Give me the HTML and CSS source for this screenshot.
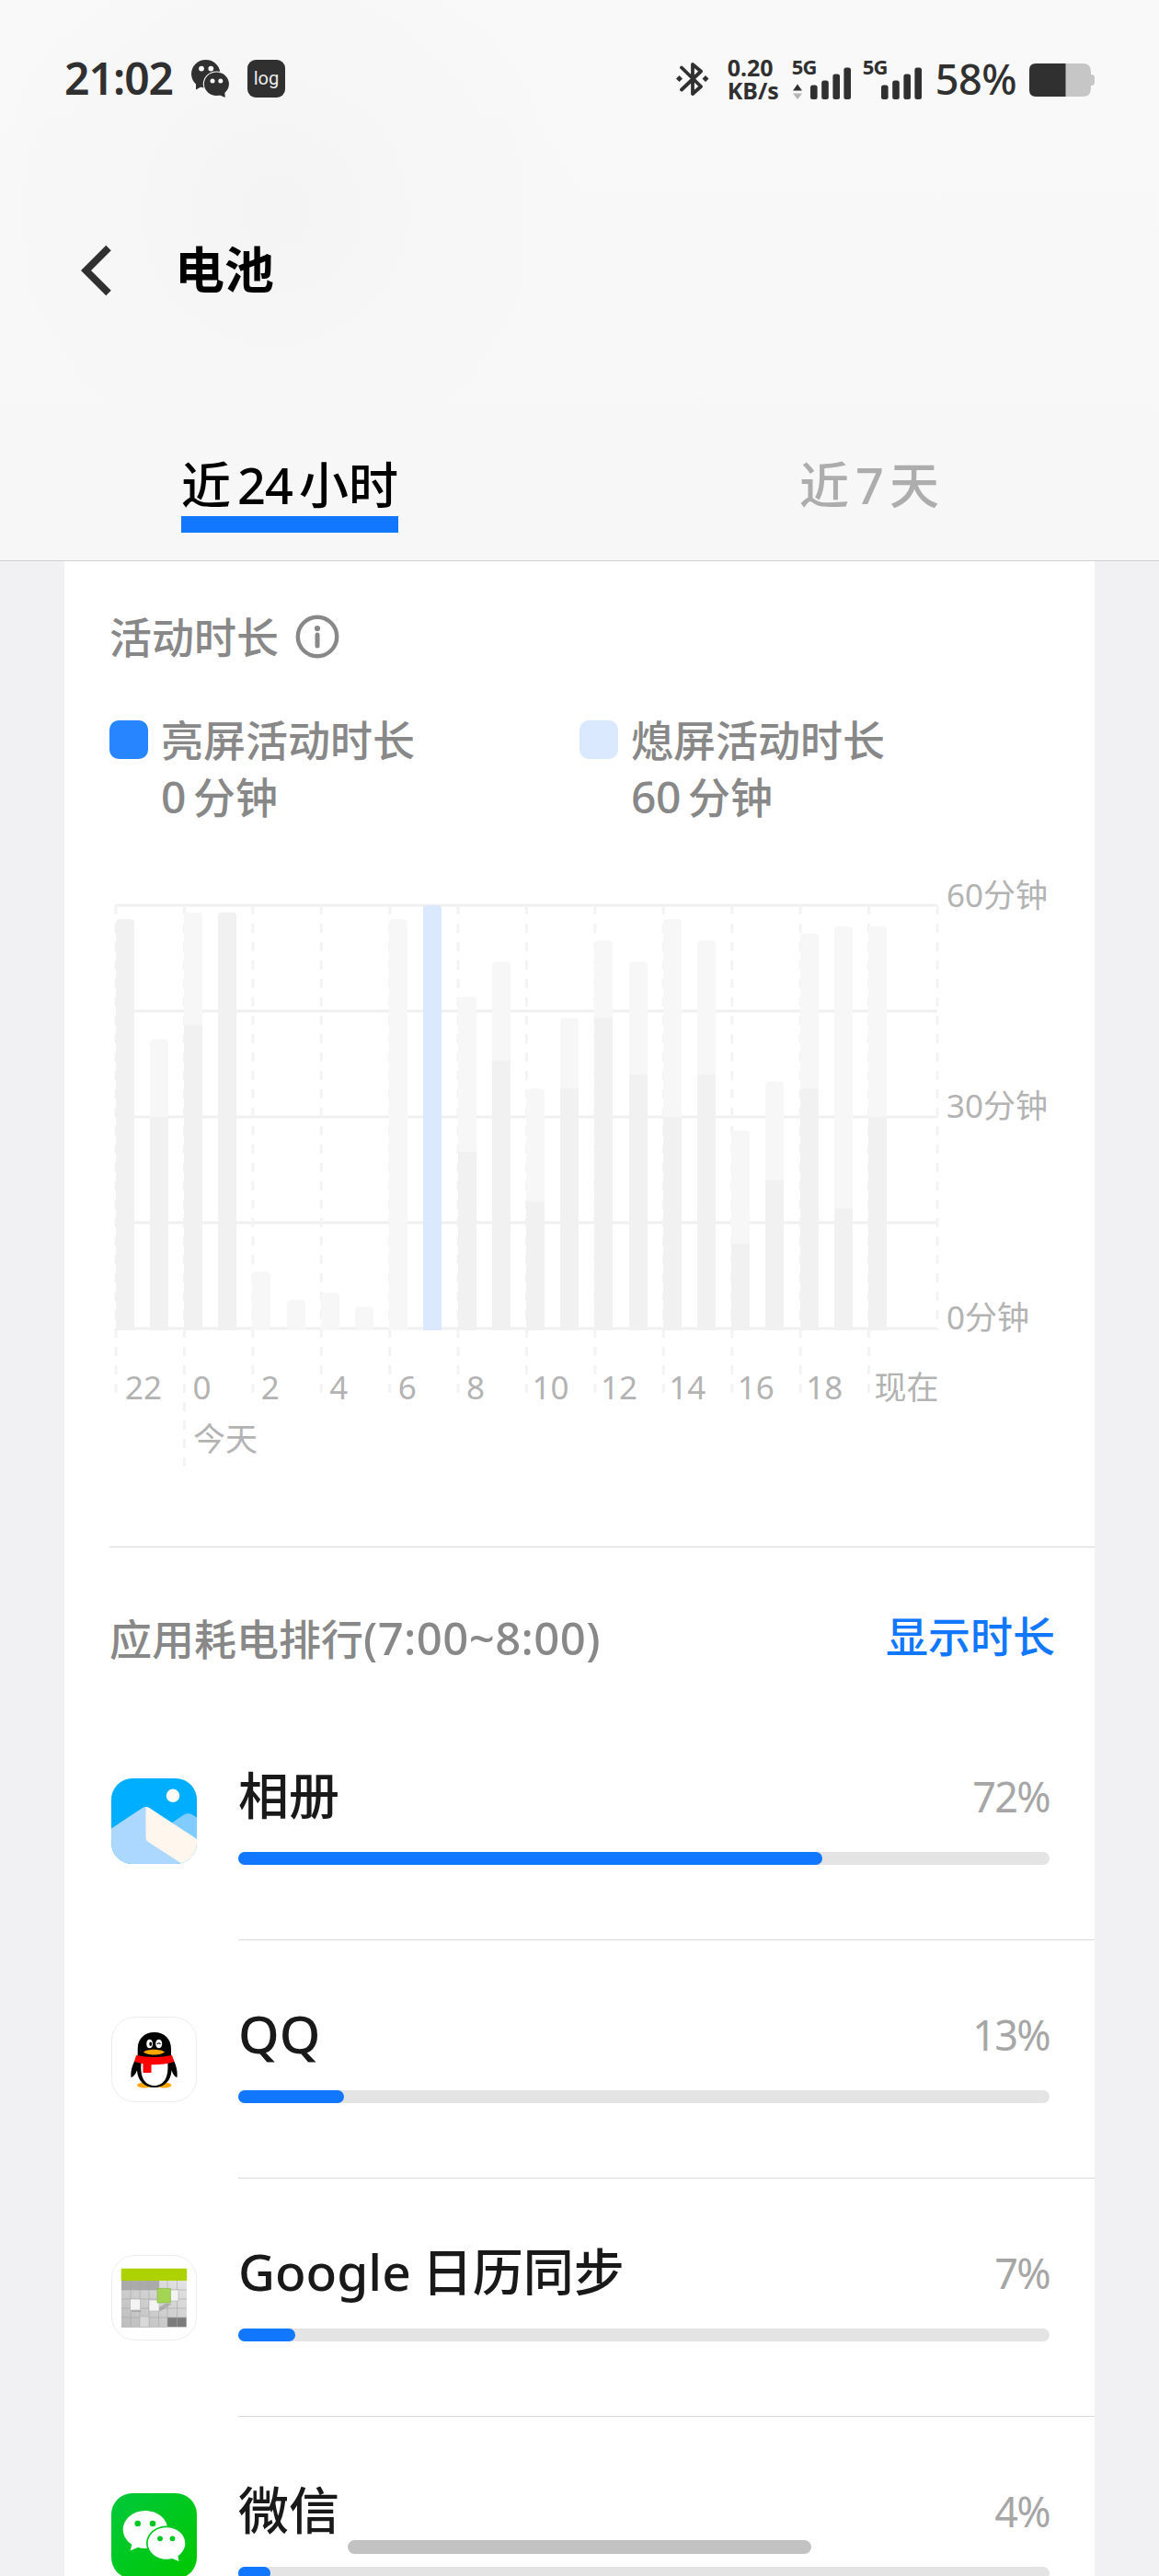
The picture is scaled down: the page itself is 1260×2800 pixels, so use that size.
FILE: index.html
```html
<!DOCTYPE html>
<html lang="zh-CN">
<head>
    <meta charset="UTF-8">
    <meta name="viewport" content="width=device-width, initial-scale=1.0">
    <title>电池</title>
    <link rel="stylesheet" href="styles.css">
</head>
<body>
    <header class="header">
        <div class="status-bar">
            <span class="clock">21:02</span>
            <svg class="status-wechat" width="42" height="42" viewBox="0 0 42 42">
                <ellipse cx="15.7" cy="15.3" rx="15.7" ry="15.3" fill="#303030"/>
                <path d="M5 25 L5 32.5 L13 28z" fill="#303030"/>
                <circle cx="11" cy="9.6" r="2.9" fill="#f8f8f8"/>
                <circle cx="21.3" cy="9.6" r="2.9" fill="#f8f8f8"/>
                <ellipse cx="27.4" cy="26.3" rx="14.6" ry="13.9" fill="#f8f8f8"/>
                <ellipse cx="27.4" cy="26.3" rx="13.5" ry="12.8" fill="#303030"/>
                <path d="M30 38 L36.8 41 L36 33z" fill="#303030"/>
                <circle cx="23" cy="23" r="2.5" fill="#f8f8f8"/>
                <circle cx="31.8" cy="23" r="2.5" fill="#f8f8f8"/>
            </svg>
            <span class="log-badge">log</span>

            <div class="status-right">
                <svg class="bluetooth" width="36" height="40" viewBox="0 0 36 40">
                    <path d="M6 7.5 L27 28 L18 36 V4 L27 11.5 L6 31.5" fill="none" stroke="#303030" stroke-width="3.8" stroke-linecap="round" stroke-linejoin="round"/>
                    <path d="M3.5 16 l3.5 3.5 -3.5 3.5 -3.5 -3.5z M32 16 l3.5 3.5 -3.5 3.5 -3.5 -3.5z" fill="#303030"/>
                </svg>
                <div class="net-speed"><span>0.20</span><span>KB/s</span></div>
                <div class="signal">
                    <span class="net-type">5G</span>
                    <svg width="65" height="45" viewBox="0 0 65 45">
                        <path d="M1 35.5 L6 28.5 L11 35.5z" fill="#303030"/>
                        <path d="M1 38.5 L6 45 L11 38.5z" fill="#b5b5b5"/>
                        <g fill="#303030">
                            <rect x="20" y="29.5" width="7.6" height="15.5" rx="2.5"/>
                            <rect x="32.2" y="24.5" width="7.6" height="20.5" rx="2.5"/>
                            <rect x="44.4" y="17.5" width="7.6" height="27.5" rx="2.5"/>
                            <rect x="56.4" y="10.5" width="7.6" height="34.5" rx="2.5"/>
                        </g>
                    </svg>
                </div>
                <div class="signal">
                    <span class="net-type">5G</span>
                    <svg width="65" height="45" viewBox="0 0 65 45">
                        <g fill="#303030">
                            <rect x="20" y="29.5" width="7.6" height="15.5" rx="2.5"/>
                            <rect x="32.2" y="24.5" width="7.6" height="20.5" rx="2.5"/>
                            <rect x="44.4" y="17.5" width="7.6" height="27.5" rx="2.5"/>
                            <rect x="56.4" y="10.5" width="7.6" height="34.5" rx="2.5"/>
                        </g>
                    </svg>
                </div>
                <span class="battery-text">58%</span>
                <svg class="battery" width="72" height="36" viewBox="0 0 72 36">
                    <path d="M39 0 H58 Q67 0 67 9 V12 Q71 12 71 15 V21 Q71 24 67 24 V27 Q67 36 58 36 H39z" fill="#c6c6c6"/>
                    <path d="M39.5 0 H7 Q0 0 0 7 V29 Q0 36 7 36 H39.5z" fill="#303030"/>
                </svg>
            </div>
        </div>

        <div class="title-bar">
            <svg class="back" width="34" height="56" viewBox="0 0 34 56">
                <path d="M30 3.5 L5.500 28 L30 52.5" fill="none" stroke="#303030" stroke-width="7.8"/>
            </svg>
            <h1>电池</h1>
        </div>

        <nav class="tabs">
            <div class="tab active"><span>近<b>24</b>小时</span></div>
            <div class="tab"><span>近<b>7</b>天</span></div>
        </nav>
    </header>

    <main class="card">
        <section class="activity">
            <h2 class="section-title">活动时长
                <svg width="48" height="48" viewBox="0 0 48 48">
                    <circle cx="24" cy="24" r="21.2" fill="none" stroke="#888" stroke-width="4.4"/>
                    <circle cx="24" cy="15" r="3.1" fill="#888"/>
                    <path d="M24 22 V34" stroke="#888" stroke-width="5" stroke-linecap="round"/>
                </svg>
            </h2>
            <div class="legend">
                <div class="legend-item">
                    <i class="swatch on"></i>
                    <p>亮屏活动时长<br><b class="num">0</b>分钟</p>
                </div>
                <div class="legend-item">
                    <i class="swatch off"></i>
                    <p>熄屏活动时长<br><b class="num">60</b>分钟</p>
                </div>
            </div>
            <svg class="chart" id="chart" width="1071" height="670" viewBox="119 940 1071 670"></svg>
        </section>

        <section class="ranking">
            <div class="ranking-head">
                <h2>应用耗电排行<span>(7:00~8:00)</span></h2>
                <a>显示时长</a>
            </div>

            <div class="app">
                <svg class="icon" viewBox="0 0 93 93">
                    <defs><clipPath id="round"><rect width="93" height="93" rx="23"/></clipPath></defs>
                    <g clip-path="url(#round)">
                        <rect width="93" height="93" fill="#00aeff"/>
                        <path d="M62 51 L79 39.5 Q83.5 37 88 39.5 L93 42.5 V68z" fill="#80ccff"/>
                        <path d="M0 54.5 L34 32 Q37.5 30 41 32 L93 66 V93 H0z" fill="#acd8ff"/>
                        <path d="M37.5 31 Q39.5 31 41 32 L93 66 V93 H77 L40 69 Q37.5 67 37.5 64z" fill="#fff7ee"/>
                        <circle cx="67" cy="18.8" r="7.2" fill="#fffdf5"/>
                    </g>
                </svg>
                <div class="info">
                    <div class="line"><span class="name">相册</span><span class="percent">72%</span></div>
                    <div class="track"><div class="fill" style="width: 72%"></div></div>
                </div>
            </div>

            <div class="app">
                <svg class="icon" viewBox="0 0 93 93">
                    <rect x=".5" y=".5" width="92" height="92" rx="25" fill="#fff" stroke="#ededed"/>
                    <ellipse cx="36" cy="74.5" rx="8" ry="3" fill="#ffa600"/>
                    <ellipse cx="57.5" cy="74.5" rx="8" ry="3" fill="#ffa600"/>
                    <path d="M28.7 42 V35 C28.7 24 36 17 46.8 17 S65 24 65 35 V42 C69 49 72.5 57 71.5 66 C69 66 67 62 65.5 58.5 C65 70 57 77 46.8 77 S28.5 70 28 58.5 C26.5 62 24 66 21.5 66 C20.5 57 24.5 49 28.7 42z"/>
                    <path d="M32.5 51 H61.3 C62.5 66 57 75 46.8 75 S31 66 32.5 51z" fill="#fff"/>
                    <ellipse cx="41.6" cy="29.5" rx="3.3" ry="4.8" fill="#fff"/>
                    <ellipse cx="51.7" cy="29.5" rx="3.5" ry="4.8" fill="#fff"/>
                    <ellipse cx="42.7" cy="29.8" rx="1.4" ry="2.2"/>
                    <path d="M49.7 30 Q51.5 27.5 53.5 30" fill="none" stroke="#000" stroke-width="1.2"/>
                    <path d="M35 38.5 C39 34.8 54 34.8 58 38.5 C54 42.5 39 42.5 35 38.5z" fill="#ffa600"/>
                    <path d="M27 42 Q46.8 46 66 42 L68.3 49 Q58 52.5 43.5 52.3 V61 H34.5 V51.3 L25 49z" fill="#f00"/>
                </svg>
                <div class="info">
                    <div class="line"><span class="name wide">QQ</span><span class="percent">13%</span></div>
                    <div class="track"><div class="fill" style="width: 13%"></div></div>
                </div>
            </div>

            <div class="app">
                <svg class="icon" viewBox="0 0 93 93">
                    <defs>
                        <linearGradient id="sheet" x1="0" y1="1" x2="1" y2="0">
                            <stop offset="0" stop-color="#bcbcbc"/>
                            <stop offset="1" stop-color="#e4e4e4"/>
                        </linearGradient>
                    </defs>
                    <rect x=".5" y=".5" width="92" height="92" rx="25" fill="#fff" stroke="#ededed"/>
                    <rect x="11" y="27" width="71" height="52" fill="url(#sheet)"/>
                    <rect x="11" y="28" width="41" height="10" fill="#aaa"/>
                    <rect x="61" y="68" width="20.5" height="10" fill="#7c7c7c"/>
                    <path d="M21 28 V78 M31 28 V78 M41 28 V78 M51.5 28 V78 M61 28 V78 M71.5 28 V78 M11 38 H82 M11 48 H82 M11 58 H82 M11 68 H82" stroke="#a4a4a4" stroke-width=".6"/>
                    <rect x="10.7" y="14.7" width="71.5" height="13.3" rx="1" fill="#acd300"/>
                    <path d="M46 61 h8 l12-8 h-8z M22 60 h10 v2 h-10z" fill="#8f8f8f" opacity=".5"/>
                    <g fill="#f3f3f3" stroke="#b4b4b4" stroke-width=".6">
                        <rect x="64" y="38" width="9" height="12"/>
                        <rect x="20.7" y="48" width="11" height="12"/>
                        <rect x="41" y="49" width="11" height="12"/>
                        <rect x="31" y="67" width="10" height="11.5" fill="#d8d8d8"/>
                    </g>
                    <rect x="50" y="36.5" width="14.3" height="15.5" fill="#a3d453" stroke="#86b53a" stroke-width=".6"/>
                </svg>
                <div class="info">
                    <div class="line"><span class="name">Google<i class="gap"></i>日历同步</span><span class="percent">7%</span></div>
                    <div class="track"><div class="fill" style="width: 7%"></div></div>
                </div>
            </div>

            <div class="app">
                <svg class="icon" viewBox="0 0 93 93">
                    <defs>
                        <linearGradient id="green" x1="0" y1="0" x2="1" y2="1">
                            <stop offset="0" stop-color="#00c83c"/>
                            <stop offset="1" stop-color="#00c800"/>
                        </linearGradient>
                    </defs>
                    <rect width="93" height="93" rx="23" fill="url(#green)"/>
                    <ellipse cx="37" cy="39.5" rx="24.3" ry="20.5" fill="#fff"/>
                    <path d="M23 54 L20.5 62.5 L31 58z" fill="#fff"/>
                    <ellipse cx="60" cy="54.5" rx="22" ry="19" fill="#00c722"/>
                    <ellipse cx="60" cy="54.5" rx="20.3" ry="17.2" fill="#fff"/>
                    <path d="M64 70 L73.5 74 L72 66z" fill="#fff"/>
                    <g fill="#00c722">
                        <circle cx="28.7" cy="33" r="3.3"/>
                        <circle cx="45" cy="33" r="3.3"/>
                        <circle cx="53" cy="49.3" r="2.9"/>
                        <circle cx="66.5" cy="49.3" r="2.9"/>
                    </g>
                </svg>
                <div class="info">
                    <div class="line"><span class="name">微信</span><span class="percent">4%</span></div>
                    <div class="track"><div class="fill" style="width: 4%"></div></div>
                </div>
            </div>
        </section>
    </main>

    <div class="home-indicator"></div>

    <script>
        // [active minutes, screen-on minutes] for each hour, starting at 22:00
        const usage = [
            [58, 58], [41, 30], [59, 43], [59, 59], [8, 0], [4, 0], [5, 0], [3, 0],
            [58, 0], [60, 0], [47, 25], [52, 38], [34, 18], [44, 34], [55, 44], [52, 36],
            [58, 30], [55, 36], [28, 12], [35, 21], [56, 34], [57, 17], [57, 30]
        ];
        const selected = 9;
        const hours = ['22', '0', '2', '4', '6', '8', '10', '12', '14', '16', '18', '现在'];
        const left = 126, right = 1019, top0 = 984, bottom = 1443.6;
        const step = (right - left) / 24;
        const perMin = (bottom - top0) / 60;
        let out = '';

        for (let i = 0; i <= 4; i++) {
            const y = Math.round(top0 + i * (bottom - top0) / 4);
            out += `<line class="grid" x1="${left}" x2="${right}" y1="${y}" y2="${y}"/>`;
        }
        for (let i = 0; i <= 12; i++) {
            const x = left + i * step * 2;
            const end = i === 12 ? 1446 : i === 1 ? 1594 : 1515;
            out += `<line class="dash" x1="${x}" x2="${x}" y1="${top0}" y2="${end}"/>`;
        }
        usage.forEach(([total, on], i) => {
            const x = Math.floor(left + i * step);
            const bar = (min, cls) => {
                const y = bottom - min * perMin;
                const r = cls === 'on' && min < total ? 0 : 4;
                return `<path class="${cls}" d="M${x} 1446 V${y + r} q0 ${-r} ${r} ${-r} h${20 - 2 * r} q${r} 0 ${r} ${r} V1446z"/>`;
            };
            out += bar(total, i === selected ? 'selected' : 'off');
            if (on) out += bar(on, 'on');
        });
        hours.forEach((h, i) => {
            const pad = i === 0 ? 10 : i > 5 ? 6 : 9;
            out += `<text x="${left + i * step * 2 + pad}" y="1521">${h}</text>`;
        });
        out += '<text x="210" y="1577">今天</text>';
        [60, 30, 0].forEach((m, i) => {
            out += `<text x="1029" y="${985.5 + i * 229.7}">${m}分钟</text>`;
        });
        document.getElementById('chart').innerHTML = out;
    </script>
</body>
</html>
```

FILE: styles.css
```css
* {
    box-sizing: border-box;
}
body {
    margin: 0;
    height: 2800px;
    overflow: hidden;
    background-color: #f1f1f4;
    font-family: "Noto Sans", "Noto Sans CJK SC", sans-serif;
    text-autospace: no-autospace;
}
h1, h2, p {
    margin: 0;
}
b, i {
    font-weight: inherit;
    font-style: normal;
}
svg {
    display: block;
    flex: none;
}
.header {
    height: 610px;
    border-bottom: 1px solid #d0d0d1;
    background: radial-gradient(circle at 300px 230px, #f4f4f4 0, #f7f7f7 210px, rgba(247, 247, 247, 0) 330px), linear-gradient(#f9f9f9, #f7f7f7);
}

/* status bar */
.status-bar {
    display: flex;
    align-items: center;
    height: 171px;
    padding: 0 70px;
    color: #303030;
}
.clock {
    width: 138px;
    margin-top: -2px;
    font-size: 48px;
    font-weight: 600;
    letter-spacing: -1px;
}
.log-badge {
    width: 41px;
    height: 41px;
    margin-left: 19px;
    border-radius: 9px;
    background: #303030;
    color: #eee;
    font-family: Roboto, sans-serif;
    font-size: 20px;
    line-height: 40px;
    text-align: center;
}
.status-right {
    display: flex;
    align-items: center;
    margin-left: auto;
}
.net-speed {
    display: flex;
    flex-direction: column;
    width: 54px;
    margin-left: 20px;
    font-size: 25px;
    font-weight: 700;
    line-height: 25px;
}
.signal {
    position: relative;
    margin-left: 16px;
    width: 61px;
}
.signal svg {
    width: 65px;
}
.net-type {
    position: absolute;
    top: -2px;
    left: 0;
    font-size: 22px;
    font-weight: 700;
    line-height: 22px;
    letter-spacing: -0.7px;
}
.battery-text {
    margin-left: 18px;
    font-size: 45px;
    font-weight: 500;
    letter-spacing: -0.5px;
    line-height: 60px;
}
.battery {
    margin: 2px -1px 0 14px;
}

/* title */
.title-bar {
    display: flex;
    align-items: center;
    height: 245px;
    padding-left: 88px;
}
h1 {
    margin: -2px 0 0 68px;
    font-size: 54px;
    font-weight: 700;
    line-height: 60px;
}

/* tabs */
.tabs {
    display: flex;
    padding-top: 78px;
}
.tab {
    flex: 1;
    text-align: center;
    color: #adadad;
    font-size: 54px;
    font-weight: 500;
    line-height: 67px;
}
.tab span {
    display: inline-block;
}
.tab b {
    margin: 0 7px;
    letter-spacing: -1px;
}
.tab.active {
    color: #000;
}
.tab.active span {
    border-bottom: 18px solid #1177ff;
}

/* card */
.card {
    margin: 0 70px;
    padding-left: 49px;
    background: #fff;
}
.activity {
    height: 1072px;
    padding-top: 58px;
    border-bottom: 1px solid #d9d9da;
    color: #888;
}
.section-title {
    display: flex;
    align-items: center;
    gap: 18px;
    height: 48px;
    font-size: 46px;
    font-weight: 500;
    line-height: 48px;
}
.legend {
    display: flex;
    margin-top: 57px;
    font-size: 46px;
    font-weight: 500;
    line-height: 62px;
}
.legend-item {
    display: flex;
    width: 511px;
}
.swatch {
    width: 42px;
    height: 42px;
    margin: 10px 14px 0 0;
    border-radius: 10px;
}
.swatch.on {
    background: #2785ff;
}
.swatch.off {
    background: #dae9fd;
}
.num {
    margin-right: 8px;
    font-size: 48px;
    letter-spacing: -0.5px;
}
.chart {
    margin-top: 43px;
}
.chart .grid {
    stroke: #f0f0f0;
    stroke-width: 3;
}
.chart .dash {
    stroke: #f3f3f3;
    stroke-width: 3;
    stroke-dasharray: 10 10;
}
.chart .off {
    fill: #f7f7f7;
}
.chart .on {
    fill: #f1f1f1;
}
.chart .selected {
    fill: #dae9fd;
}
.chart text {
    fill: #b3b3b3;
    font-size: 35px;
}

/* ranking */
.ranking-head {
    display: flex;
    justify-content: space-between;
    height: 168px;
    padding: 63px 43px 0 0;
    font-size: 46px;
    line-height: 70px;
}
.ranking-head h2 {
    color: #888;
    font-size: inherit;
    font-weight: 500;
}
.ranking-head span {
    font-size: 49px;
    letter-spacing: 0.4px;
}
.ranking-head a {
    margin-top: -2px;
    color: #1177ff;
    font-weight: 500;
}
.app {
    display: flex;
    height: 259px;
}
.icon {
    width: 93px;
    height: 93px;
    margin: 83px 45px 0 2px;
}
.info {
    flex: 1;
    padding: 61px 49px 0 0;
    border-bottom: 1px solid #d9d9da;
}
.line {
    display: flex;
    justify-content: space-between;
    line-height: 80px;
}
.name {
    color: #191919;
    font-size: 55px;
    font-weight: 500;
}
.name.wide {
    font-size: 57px;
}
.gap {
    margin-right: 12px;
}
.percent {
    margin-top: 2px;
    color: #a6a6a6;
    font-size: 45px;
    letter-spacing: -1.7px;
}
.track {
    height: 14px;
    margin-top: 20px;
    border-radius: 7px;
    background: #e4e4e4;
}
.fill {
    height: 100%;
    border-radius: 7px;
    background: #1177ff;
}

.home-indicator {
    position: absolute;
    top: 2761px;
    left: 378px;
    width: 504px;
    height: 15px;
    border-radius: 8px;
    background: #c2c2c2;
}
```
